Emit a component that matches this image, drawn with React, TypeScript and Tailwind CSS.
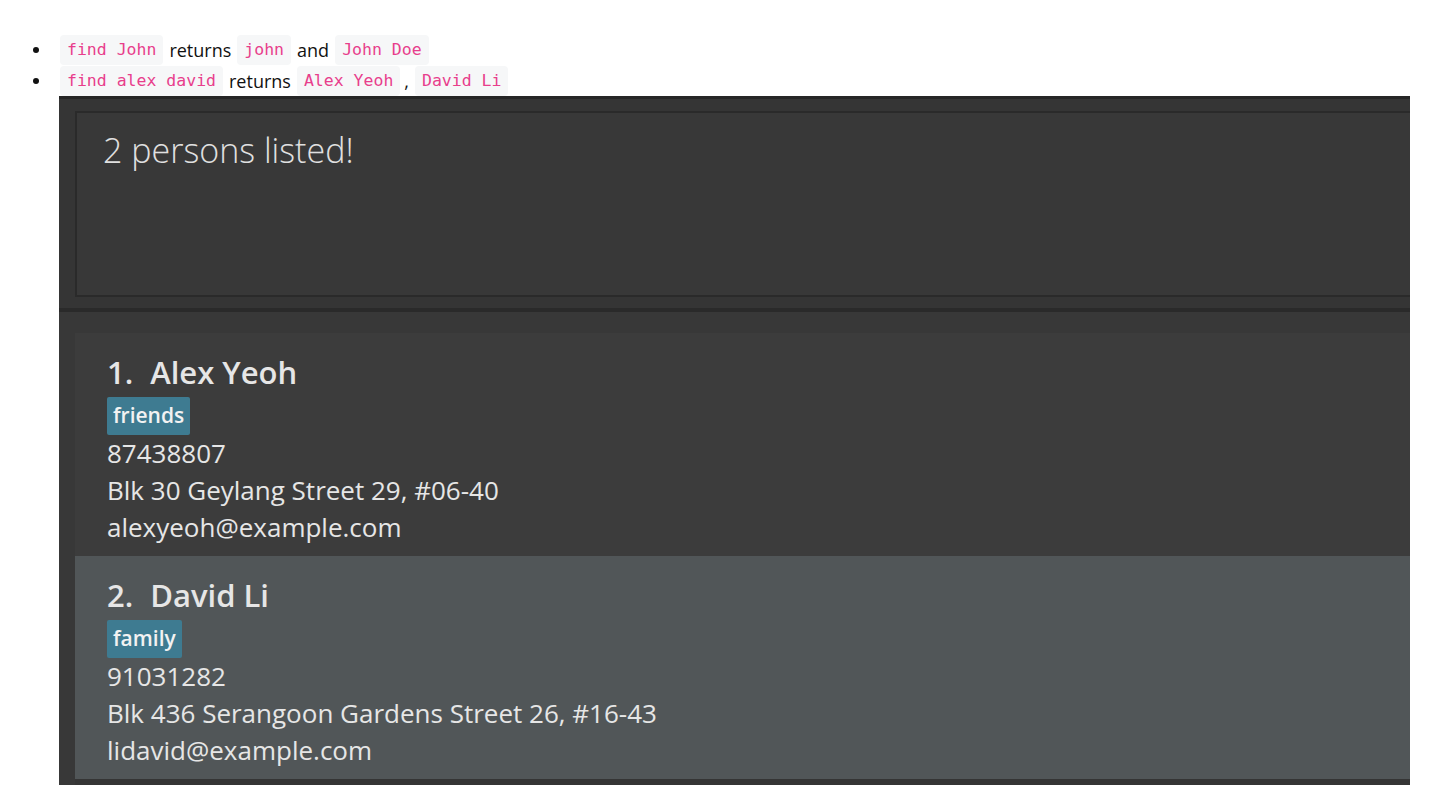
import React from 'react'

function Code({ children }: { children: React.ReactNode }) {
  return (
    <code className="rounded-[4px] bg-[#f6f7f8] px-[7px] py-[3px] text-[16.5px] text-[#e83e8c] [font-family:'DejaVu_Sans_Mono',monospace]">
      {children}
    </code>
  )
}

type Person = { idx: number; name: string; tag: string; phone: string; address: string; email: string }

const persons: Person[] = [
  { idx: 1, name: 'Alex Yeoh', tag: 'friends', phone: '87438807', address: 'Blk 30 Geylang Street 29, #06-40', email: 'alexyeoh@example.com' },
  { idx: 2, name: 'David Li', tag: 'family', phone: '91031282', address: 'Blk 436 Serangoon Gardens Street 26, #16-43', email: 'lidavid@example.com' },
]

function PersonCard({ p, odd }: { p: Person; odd: boolean }) {
  return (
    <div className={`${odd ? 'bg-[#515658]' : 'bg-[#3c3c3c]'} pl-[32px] pt-[19px] pb-[10px] text-[#e6e6e6]`}>
      <div className="flex h-[40px] items-center text-[31px] font-semibold">
        <span className="mr-[17px]">{p.idx}.</span>
        <span>{p.name}</span>
      </div>
      <div className="mt-[5px] flex">
        <span className="flex h-[38px] items-center rounded-[2px] bg-[#3e7b91] px-[6px] text-[21px] font-semibold text-[#f2f2f2]">
          {p.tag}
        </span>
      </div>
      <div className="text-[26px] leading-[37px]">{p.phone}</div>
      <div className="text-[26px] leading-[37px]">{p.address}</div>
      <div className="text-[26px] leading-[37px]">{p.email}</div>
    </div>
  )
}

export default function App() {
  return (
    <div className="min-h-screen bg-white [font-family:'Open_Sans',sans-serif]">
      <div className="pt-[34px]">
        <div className="flex h-[32px] items-center text-[18px] text-[#111]">
          <span className="ml-[33px] mr-[21px] h-[6px] w-[6px] rounded-full bg-[#111]"></span>
          <Code>find John</Code>
          <span className="mx-[6px]">returns</span>
          <Code>john</Code>
          <span className="mx-[6px]">and</span>
          <Code>John Doe</Code>
        </div>
        <div className="flex h-[30px] items-center text-[18px] text-[#111]">
          <span className="ml-[33px] mr-[21px] h-[6px] w-[6px] rounded-full bg-[#111]"></span>
          <Code>find alex david</Code>
          <span className="mx-[6px]">returns</span>
          <Code>Alex Yeoh</Code>
          <span className="ml-[4px] mr-[6px]">,</span>
          <Code>David Li</Code>
        </div>
      </div>

      {/* app window */}
      <div className="ml-[59px] h-[689px] w-[1351px] overflow-hidden bg-[#353535]">
        <div className="h-[3px] bg-[#262626]"></div>
        <div className="pl-[16px] pt-[12px]">
          <div className="h-[186px] w-[1400px] border-2 border-[#2a2a2a] bg-[#383838] pl-[26px] pt-[12px]">
            <div className="text-[34px] font-light text-[#e0e0e0]">2 persons listed!</div>
          </div>
        </div>
        <div className="mt-[11px] h-[4px] bg-[#2a2a2a]"></div>
        <div className="bg-[#383838] pl-[16px] pt-[21px]">
          {persons.map((p, i) => (
            <PersonCard key={p.idx} p={p} odd={i % 2 === 1} />
          ))}
          <div className="h-[7px] bg-[#353535]"></div>
        </div>
      </div>
    </div>
  )
}
